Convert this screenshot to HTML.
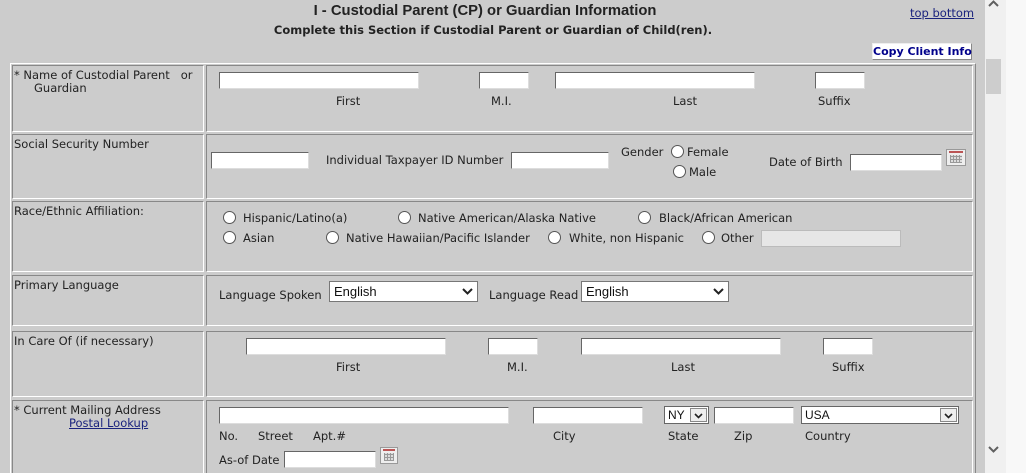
<!DOCTYPE html>
<html style="overflow:hidden"><head><meta charset="utf-8"><style>
*{margin:0;padding:0;box-sizing:border-box}
html,body{width:1026px;height:473px;overflow:hidden}
body{background:#ccc;position:relative;font-family:"DejaVu Sans","Liberation Sans",sans-serif;font-size:11.5px;color:#222}
.a{position:absolute;white-space:nowrap;line-height:13px}
.in{position:absolute;background:#fff;border:1px solid #ddd;border-top-color:#666;border-left-color:#666;height:17px}
.cell{position:absolute;border:1px solid #fff;border-top-color:#888;border-left-color:#888}
.rd{position:absolute;width:13px;height:13px;border-radius:50%;background:#fff;border:1px solid #555}
.sel{position:absolute;background:#fff;border:1px solid #777;height:21px;font-size:13px;font-family:"Liberation Sans",sans-serif;padding:2px 4px;line-height:15px;color:#111}
.sel svg{position:absolute;right:4px;top:6px}
.cal{position:absolute;width:20px;height:17px;border:1px solid #999;background:#eee}
.cal:before{content:"";position:absolute;left:2px;top:1px;right:2px;height:2px;background:#b55}
.cal:after{content:"";position:absolute;left:3px;top:5px;right:3px;bottom:2px;background:repeating-linear-gradient(90deg,#999 0 1px,transparent 1px 3px),repeating-linear-gradient(0deg,#999 0 1px,#ddd 1px 3px)}
</style></head><body>
<div class="a" style="left:0;width:970px;top:3px;text-align:center;font:bold 14.8px 'Liberation Sans',sans-serif;line-height:17px">I - Custodial Parent (CP) or Guardian Information</div>
<div class="a" style="left:0;width:986px;top:24px;text-align:center;font-weight:bold">Complete this Section if Custodial Parent or Guardian of Child(ren).</div>
<div class="a" style="left:910px;top:7px;color:#1a237e;text-decoration:underline">top bottom</div>
<div class="a" style="left:872px;top:43px;width:100px;height:17px;background:#fff;border:1px solid #888;border-top-color:#eee;border-left-color:#eee;color:#00008b;font-weight:bold;text-align:center;line-height:15px;font-size:11px">Copy Client Info</div>

<div style="position:absolute;left:10px;top:63px;width:966px;height:410px;border:1px solid #fff;border-right-color:#888;border-bottom:none"></div>
<div class="cell" style="left:12px;top:65px;width:192px;height:67px"></div><div class="cell" style="left:206px;top:65px;width:767px;height:67px"></div>
<div class="cell" style="left:12px;top:134px;width:192px;height:65px"></div><div class="cell" style="left:206px;top:134px;width:767px;height:65px"></div>
<div class="cell" style="left:12px;top:201px;width:192px;height:71px"></div><div class="cell" style="left:206px;top:201px;width:767px;height:71px"></div>
<div class="cell" style="left:12px;top:275px;width:192px;height:51px"></div><div class="cell" style="left:206px;top:275px;width:767px;height:51px"></div>
<div class="cell" style="left:12px;top:331px;width:192px;height:66px"></div><div class="cell" style="left:206px;top:331px;width:767px;height:66px"></div>
<div class="cell" style="left:12px;top:400px;width:192px;height:73px;border-bottom:none"></div><div class="cell" style="left:206px;top:400px;width:767px;height:73px;border-bottom:none"></div>

<div class="a" style="left:14px;top:69px">* Name of Custodial Parent &nbsp;&nbsp;or</div>
<div class="a" style="left:34px;top:82px">Guardian</div>
<div class="in" style="left:219px;top:72px;width:200px"></div><div class="in" style="left:479px;top:72px;width:50px"></div>
<div class="in" style="left:555px;top:72px;width:200px"></div><div class="in" style="left:815px;top:72px;width:50px"></div>
<div class="a" style="left:336px;top:95px">First</div><div class="a" style="left:491px;top:95px">M.I.</div>
<div class="a" style="left:673px;top:95px">Last</div><div class="a" style="left:818px;top:95px">Suffix</div>

<div class="a" style="left:14px;top:138px">Social Security Number</div>
<div class="in" style="left:211px;top:152px;width:98px"></div>
<div class="a" style="left:326px;top:154px">Individual Taxpayer ID Number</div>
<div class="in" style="left:511px;top:152px;width:98px"></div>
<div class="a" style="left:621px;top:146px">Gender</div>
<div class="rd" style="left:671px;top:145px"></div><div class="a" style="left:687px;top:146px">Female</div>
<div class="rd" style="left:673px;top:165px"></div><div class="a" style="left:689px;top:166px">Male</div>
<div class="a" style="left:769px;top:156px">Date of Birth</div>
<div class="in" style="left:850px;top:154px;width:92px"></div>
<div class="cal" style="left:946px;top:149px"></div>

<div class="a" style="left:14px;top:205px">Race/Ethnic Affiliation:</div>
<div class="rd" style="left:223px;top:211px"></div><div class="a" style="left:243px;top:212px">Hispanic/Latino(a)</div>
<div class="rd" style="left:398px;top:211px"></div><div class="a" style="left:418px;top:212px">Native American/Alaska Native</div>
<div class="rd" style="left:638px;top:211px"></div><div class="a" style="left:659px;top:212px">Black/African American</div>
<div class="rd" style="left:223px;top:231px"></div><div class="a" style="left:243px;top:232px">Asian</div>
<div class="rd" style="left:326px;top:231px"></div><div class="a" style="left:346px;top:232px">Native Hawaiian/Pacific Islander</div>
<div class="rd" style="left:548px;top:231px"></div><div class="a" style="left:569px;top:232px">White, non Hispanic</div>
<div class="rd" style="left:702px;top:231px"></div><div class="a" style="left:721px;top:232px">Other</div>
<div class="in" style="left:761px;top:230px;width:140px;background:#e6e6e6;border-color:#bbb"></div>

<div class="a" style="left:14px;top:279px">Primary Language</div>
<div class="a" style="left:219px;top:289px">Language Spoken</div>
<div class="sel" style="left:329px;top:281px;width:149px">English<svg width="11" height="8"><path d="M1 1l4.5 4.5L10 1" stroke="#222" stroke-width="2" fill="none"/></svg></div>
<div class="a" style="left:489px;top:289px">Language Read</div>
<div class="sel" style="left:581px;top:281px;width:148px">English<svg width="11" height="8"><path d="M1 1l4.5 4.5L10 1" stroke="#222" stroke-width="2" fill="none"/></svg></div>

<div class="a" style="left:14px;top:335px">In Care Of (if necessary)</div>
<div class="in" style="left:246px;top:338px;width:200px"></div><div class="in" style="left:488px;top:338px;width:50px"></div>
<div class="in" style="left:581px;top:338px;width:200px"></div><div class="in" style="left:823px;top:338px;width:50px"></div>
<div class="a" style="left:336px;top:361px">First</div><div class="a" style="left:507px;top:361px">M.I.</div>
<div class="a" style="left:671px;top:361px">Last</div><div class="a" style="left:832px;top:361px">Suffix</div>

<div class="a" style="left:14px;top:404px">* Current Mailing Address</div>
<div class="a" style="left:69px;top:417px;color:#1a237e;text-decoration:underline">Postal Lookup</div>
<div class="in" style="left:219px;top:407px;width:290px"></div>
<div class="in" style="left:533px;top:407px;width:110px"></div>
<div class="sel" style="left:664px;top:406px;width:45px;height:18px;font-size:12px;padding:1px 3px;line-height:14px;border-color:#666">NY<span style="position:absolute;right:1px;top:1px;width:17px;height:14px;border:1px solid #888;background:#eee"></span><svg width="9" height="6" style="right:5px;top:6px"><path d="M1 1l3.5 3.5L8 1" stroke="#222" stroke-width="1.6" fill="none"/></svg></div>
<div class="in" style="left:714px;top:407px;width:80px"></div>
<div class="sel" style="left:801px;top:406px;width:158px;height:18px;font-size:12px;padding:1px 3px;line-height:14px;border-color:#666">USA<span style="position:absolute;right:1px;top:1px;width:17px;height:14px;border:1px solid #888;background:#eee"></span><svg width="9" height="6" style="right:5px;top:6px"><path d="M1 1l3.5 3.5L8 1" stroke="#222" stroke-width="1.6" fill="none"/></svg></div>
<div class="a" style="left:219px;top:430px">No.</div><div class="a" style="left:258px;top:430px">Street</div><div class="a" style="left:313px;top:430px">Apt.#</div>
<div class="a" style="left:553px;top:430px">City</div><div class="a" style="left:668px;top:430px">State</div>
<div class="a" style="left:734px;top:430px">Zip</div><div class="a" style="left:805px;top:430px">Country</div>
<div class="a" style="left:219px;top:454px">As-of Date</div>
<div class="in" style="left:284px;top:451px;width:92px"></div>
<div class="cal" style="left:380px;top:447px;width:18px"></div>

<div style="position:absolute;left:985px;top:0;width:21px;height:473px;background:#f0f0f0"></div>
<div style="position:absolute;left:1006px;top:0;width:20px;height:473px;background:#f8f8f8"></div>
<div style="position:absolute;left:986px;top:59px;width:15px;height:35px;background:#cdcdcd"></div>
<svg style="position:absolute;left:987px;top:0" width="13" height="8"><path d="M2 6l4.5-4.5L11 6" stroke="#606060" stroke-width="2" fill="none"/></svg>
<svg style="position:absolute;left:987px;top:445px" width="13" height="10"><path d="M2 2l4.5 4.5L11 2" stroke="#606060" stroke-width="2" fill="none"/></svg>
</body></html>
